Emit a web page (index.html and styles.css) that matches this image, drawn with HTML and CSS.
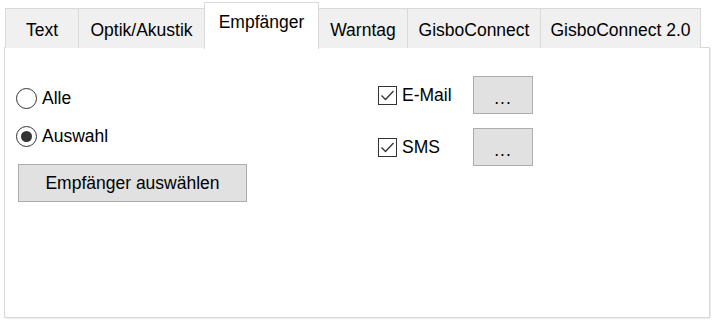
FILE: index.html
```html
<!DOCTYPE html>
<html lang="de">
<head>
<meta charset="utf-8">
<link rel="stylesheet" href="styles.css">
</head>
<body>
<div class="tabs">
  <div class="tab" style="width:74px">Text</div>
  <div class="tab" style="width:127px">Optik/Akustik</div>
  <div class="tab active" style="width:115px">Empfänger</div>
  <div class="tab" style="width:90px">Warntag</div>
  <div class="tab" style="width:134px">GisboConnect</div>
  <div class="tab" style="width:161px">GisboConnect 2.0</div>
</div>
<div class="panel">
  <div class="col left">
    <label class="opt"><span class="radio"></span>Alle</label>
    <label class="opt"><span class="radio on"></span>Auswahl</label>
    <button class="btn wide">Empfänger auswählen</button>
  </div>
  <div class="col right">
    <div class="row">
      <label class="opt chk"><span class="box"><svg viewBox="0 0 19 19" width="19" height="19"><path d="M3.5 9.5 L7.5 13.5 L15.5 5" fill="none" stroke="#333" stroke-width="1.3"/></svg></span>E-Mail</label>
      <button class="btn dots">...</button>
    </div>
    <div class="row">
      <label class="opt chk"><span class="box"><svg viewBox="0 0 19 19" width="19" height="19"><path d="M3.5 9.5 L7.5 13.5 L15.5 5" fill="none" stroke="#333" stroke-width="1.3"/></svg></span>SMS</label>
      <button class="btn dots">...</button>
    </div>
  </div>
</div>
</body>
</html>
```
FILE: styles.css
```css
* { box-sizing: border-box; }
html, body { margin: 0; background: #ffffff; }
body {
  font-family: "Liberation Sans", Arial, sans-serif;
  font-size: 17.5px;
  color: #000;
  width: 717px;
  height: 323px;
  overflow: hidden;
}
.tabs {
  display: flex;
  align-items: flex-end;
  padding-left: 5px;
  height: 48px;
  position: relative;
  z-index: 2;
}
.tab {
  height: 40px;
  margin-right: -1px;
  background: #f0f0f0;
  border: 1px solid #d9d9d9;
  border-bottom: none;
  display: flex;
  justify-content: center;
  align-items: center;
  padding-top: 3px;
  white-space: nowrap;
}
.tab.active {
  height: 47px;
  margin-bottom: -1px;
  background: #fff;
  padding-top: 0;
  padding-bottom: 8px;
  position: relative;
  z-index: 3;
}
.panel {
  margin-left: 4px;
  width: 706px;
  height: 271px;
  margin-top: -1px;
  border: 1px solid #d9d9d9;
  box-shadow: 1px 1px 0 #ececec;
  display: grid;
  grid-template-columns: 362px 1fr;
  padding: 28px 0 0 11px;
}
.col { display: flex; flex-direction: column; }
.left { padding-top: 3px; }
.left .opt { height: 38px; }
.opt {
  display: flex;
  align-items: center;
  gap: 5px;
  line-height: 20px;
}
.radio {
  width: 21px;
  height: 21px;
  border: 1.5px solid #333;
  border-radius: 50%;
  display: flex;
  align-items: center;
  justify-content: center;
  background: #fff;
}
.radio.on::after {
  content: "";
  width: 11px;
  height: 11px;
  border-radius: 50%;
  background: #333;
}
.btn {
  font: inherit;
  color: #000;
  background: #e1e1e1;
  border: 1.5px solid #adadad;
  padding: 0;
  height: 38px;
}
.wide { width: 229px; margin-left: 2px; margin-top: 9px; }
.right { margin-top: -1px; padding-top: 1px; gap: 14px; }
.row { display: flex; align-items: center; height: 38px; }
.chk { width: 95px; }
.box {
  width: 19px;
  height: 19px;
  border: 1.3px solid #333;
  display: flex;
  background: #fff;
}
.box svg { display: block; margin: -1px; }
.dots { width: 60px; padding-top: 6px; letter-spacing: 1px; }
```
